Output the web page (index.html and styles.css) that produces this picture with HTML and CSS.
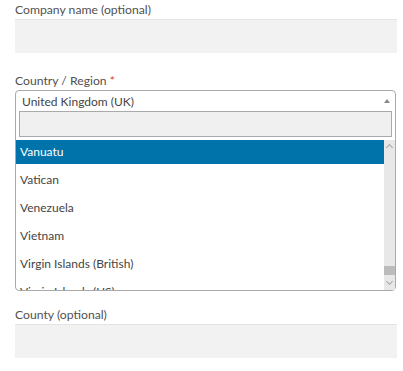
FILE: index.html
```html
<!DOCTYPE html>
<html>
<head>
    <title>Checkout</title>
    <link rel="stylesheet" href="styles.css">
</head>
<body>
    <div class="form">
        <div class="field">
            <label>Company name (optional)</label>
            <input type="text" class="text-input">
        </div>

        <div class="field">
            <label>Country / Region <span class="req">*</span></label>
            <div class="combo">
                <div class="combo-current">
                    <span>United Kingdom (UK)</span>
                    <span class="arrow"></span>
                </div>
                <div class="combo-search">
                    <input type="text">
                </div>
                <div class="combo-list">
                    <ul class="options">
                        <li class="active">Vanuatu</li>
                        <li>Vatican</li>
                        <li>Venezuela</li>
                        <li>Vietnam</li>
                        <li>Virgin Islands (British)</li>
                        <li>Virgin Islands (US)</li>
                    </ul>
                    <div class="scrollbar">
                        <span class="chev up"></span>
                        <span class="thumb"></span>
                        <span class="chev down"></span>
                    </div>
                </div>
            </div>
        </div>

        <div class="field last">
            <label>County (optional)</label>
            <input type="text" class="text-input">
        </div>
    </div>
</body>
</html>
```

FILE: styles.css
```css
body {
    margin: 0;
    font-family: Lato, "Open Sans", sans-serif;
    font-size: 12px;
    color: #515151;
    background-color: #ffffff;
}

.form {
    padding: 0 6px 0 15px;
}

.field {
    margin-bottom: 18px;
}

label {
    display: block;
    line-height: 19px;
    font-size: 12.2px;
}

.req {
    color: #e2401c;
}

.text-input {
    display: block;
    box-sizing: border-box;
    width: 382px;
    height: 34px;
    margin: 0;
    border: none;
    border-top: 1px solid #e4e4e4;
    background-color: #f2f2f2;
}

.combo {
    width: 381px;
    box-sizing: border-box;
    border: 1px solid #aaaaaa;
    border-radius: 4px;
    margin-bottom: -4px;
}

.combo-current {
    display: flex;
    justify-content: space-between;
    align-items: center;
    height: 20px;
    padding: 0 5px 0 6px;
    color: #444444;
}

.arrow {
    width: 0;
    height: 0;
    border-left: 3px solid transparent;
    border-right: 3px solid transparent;
    border-bottom: 4px solid #888888;
}

.combo-search {
    padding: 0 3px 3px;
}

.combo-search input {
    display: block;
    box-sizing: border-box;
    width: 100%;
    height: 26px;
    margin: 0;
    border: 1px solid #aaaaaa;
    background-color: #f0f0f0;
}

.combo-list {
    display: flex;
    height: 150px;
    overflow: hidden;
}

.options {
    flex: 1;
    list-style: none;
    margin: 0;
    padding: 0;
    color: #444444;
}

.options li {
    height: 24px;
    line-height: 24px;
    margin-bottom: 4px;
    padding: 0 4px;
}

.options li.active {
    background-color: #0073aa;
    color: #ffffff;
}

.scrollbar {
    position: relative;
    width: 11px;
    background-color: #e8e8e8;
}

.thumb {
    position: absolute;
    left: 0;
    right: 0;
    top: 126px;
    height: 9px;
    background-color: #bcbcbc;
}

.chev {
    position: absolute;
    left: 3px;
    width: 4px;
    height: 4px;
    border-left: 1px solid #a8a8a8;
    border-top: 1px solid #a8a8a8;
}

.chev.up {
    top: 5px;
    transform: rotate(45deg);
}

.chev.down {
    bottom: 6px;
    transform: rotate(-135deg);
}
```
